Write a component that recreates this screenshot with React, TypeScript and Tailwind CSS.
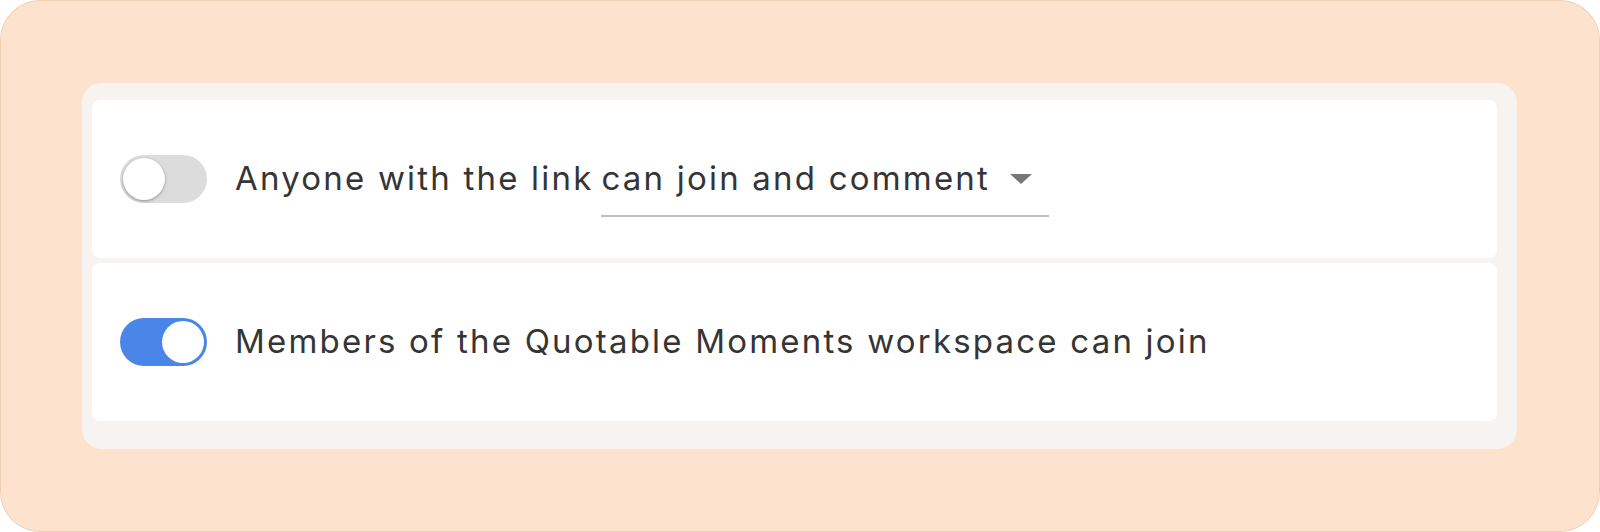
import { useState } from "react";

function Toggle({ on, onChange }: { on: boolean; onChange: () => void }) {
  return (
    <button
      type="button"
      onClick={onChange}
      className={`flex h-[48px] w-[87px] shrink-0 items-center rounded-full px-[3px] ${
        on ? "justify-end bg-[#4a86e8]" : "justify-start bg-[#dcdcdc]"
      }`}
    >
      <span
        className={`block size-[42px] rounded-full bg-white ${
          on ? "" : "shadow-[0_1px_3px_rgba(0,0,0,0.35)]"
        }`}
      />
    </button>
  );
}

export default function App() {
  const [linkOn, setLinkOn] = useState(false);
  const [membersOn, setMembersOn] = useState(true);

  return (
    <div className="h-[532px] w-[1600px] rounded-[40px] border border-[#efcfb4] bg-[#fde3cd] pb-[82px] pl-[81px] pr-[82px] pt-[82px] font-['Inter',sans-serif] text-[33px] tracking-[2.2px] text-[#353535]">
      <div className="flex h-full flex-col gap-[5px] rounded-[20px] bg-[#f6f3f0] pb-[28px] pl-[10px] pr-[20px] pt-[17px]">
        <div className="flex h-[158px] items-center gap-[28px] rounded-[8px] bg-white pl-[28px]">
          <Toggle on={linkOn} onChange={() => setLinkOn(!linkOn)} />
          <div className="flex items-center">
            <span>Anyone with the link</span>
            <span className="relative ml-[8px] flex items-center">
              <span>can join and comment</span>
              <svg width="22" height="10" viewBox="0 0 22 10" className="ml-[20px]">
                <path d="M0 0 H22 L11 10 Z" fill="#777" />
              </svg>
              <span className="absolute -bottom-[13px] left-[-1px] right-[-17px] h-[2px] bg-[#bdbdbd]" />
            </span>
          </div>
        </div>
        <div className="flex h-[158px] items-center gap-[28px] rounded-[8px] bg-white pl-[28px]">
          <Toggle on={membersOn} onChange={() => setMembersOn(!membersOn)} />
          <span>Members of the Quotable Moments workspace can join</span>
        </div>
      </div>
    </div>
  );
}
